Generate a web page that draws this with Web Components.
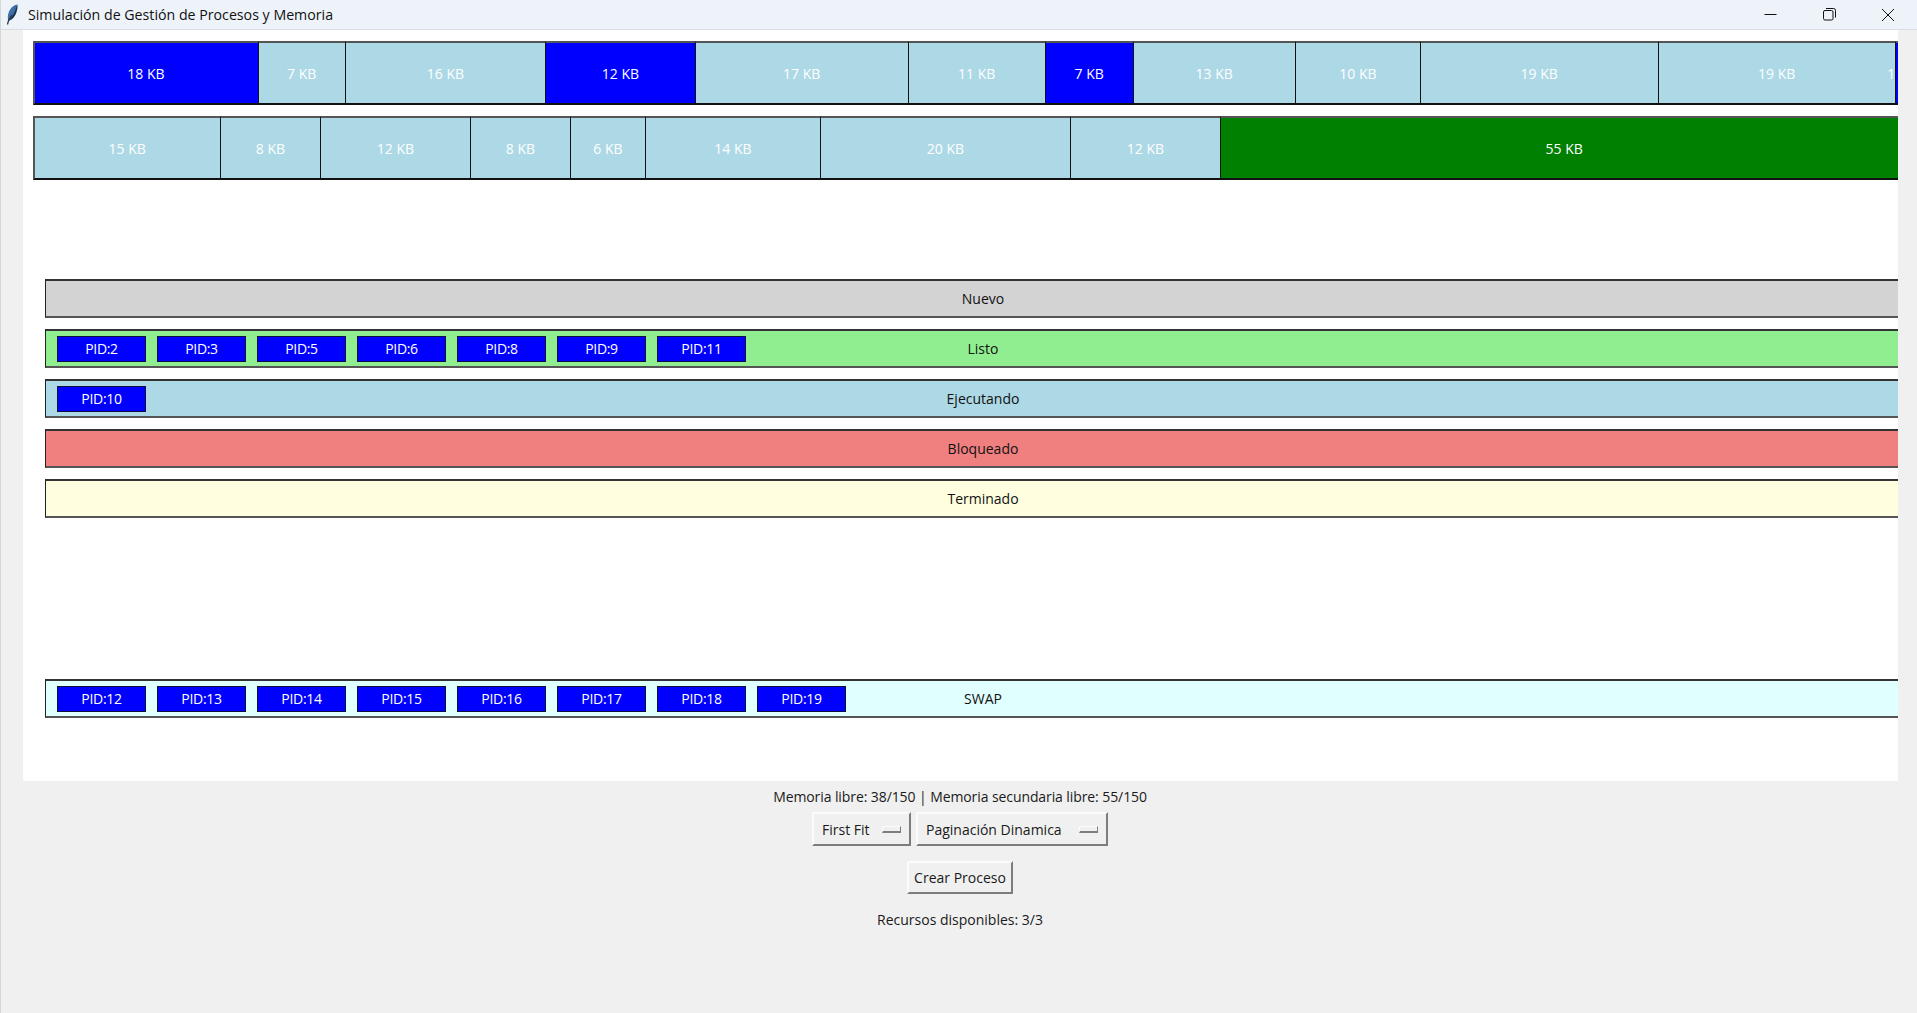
<!DOCTYPE html>
<html lang="es">
<head>
<meta charset="utf-8">
<title>Simulación de Gestión de Procesos y Memoria</title>
<style>
  html, body { margin: 0; height: 100%; overflow: hidden; }
  body { background: #f0f0f0; font: 14px "Open Sans", "Liberation Sans", sans-serif; color: #1a1a1a; }
  sim-window { height: 100vh; }
</style>
</head>
<body>
<sim-window>
  <title-bar>Simulación de Gestión de Procesos y Memoria</title-bar>
  <sim-canvas>
    <mem-row slot="memory">
      <mem-block kb="18" kind="used"></mem-block>
      <mem-block kb="7"></mem-block>
      <mem-block kb="16"></mem-block>
      <mem-block kb="12" kind="used"></mem-block>
      <mem-block kb="17"></mem-block>
      <mem-block kb="11"></mem-block>
      <mem-block kb="7" kind="used"></mem-block>
      <mem-block kb="13"></mem-block>
      <mem-block kb="10"></mem-block>
      <mem-block kb="19"></mem-block>
      <mem-block kb="19"></mem-block>
      <mem-block kb="1" kind="used"></mem-block>
    </mem-row>
    <mem-row slot="memory">
      <mem-block kb="15"></mem-block>
      <mem-block kb="8"></mem-block>
      <mem-block kb="12"></mem-block>
      <mem-block kb="8"></mem-block>
      <mem-block kb="6"></mem-block>
      <mem-block kb="14"></mem-block>
      <mem-block kb="20"></mem-block>
      <mem-block kb="12"></mem-block>
      <mem-block kb="55" kind="free"></mem-block>
    </mem-row>
    <state-bar slot="states" label="Nuevo" color="#d3d3d3"></state-bar>
    <state-bar slot="states" label="Listo" color="#90ee90" pids="2,3,5,6,8,9,11"></state-bar>
    <state-bar slot="states" label="Ejecutando" color="#add8e6" pids="10"></state-bar>
    <state-bar slot="states" label="Bloqueado" color="#f08080"></state-bar>
    <state-bar slot="states" label="Terminado" color="#ffffe0"></state-bar>
    <state-bar slot="swap" label="SWAP" color="#e0ffff" pids="12,13,14,15,16,17,18,19"></state-bar>
  </sim-canvas>
  <control-panel>
    <span slot="memory">Memoria libre: 38/150 | Memoria secundaria libre: 55/150</span>
    <tk-menu slot="menus" style="width:99px">First Fit</tk-menu>
    <tk-menu slot="menus" style="width:192px">Paginación Dinamica</tk-menu>
    <tk-button slot="action">Crear Proceso</tk-button>
    <span slot="resources">Recursos disponibles: 3/3</span>
  </control-panel>
</sim-window>

<script>
const KB_WIDTH = 12.5;

class SimWindow extends HTMLElement {
  constructor() {
    super();
    this.attachShadow({mode: 'open'});
    this.shadowRoot.innerHTML = `
      <style>
        :host { display: flex; flex-direction: column; border-left: 1px solid #d6d6d6; box-sizing: border-box; }
      </style>
      <slot></slot>
    `;
  }
}

class TitleBar extends HTMLElement {
  constructor() {
    super();
    this.attachShadow({mode: 'open'});
    this.shadowRoot.innerHTML = `
      <style>
        :host {
          display: flex; align-items: center; height: 29px; flex: none;
          background: #eef3fa; border-bottom: 1px solid #d9dce0;
          color: #111; font-size: 14.2px;
        }
        .logo { width: 12px; height: 21px; margin: 0 10px 0 5px; flex: none; }
        .text { flex: 1; }
        .btn { width: 58.5px; height: 29px; display: flex; align-items: center; justify-content: center; flex: none; }
        svg { display: block; }
      </style>
      <svg class="logo" viewBox="0 0 12 21">
        <path d="M11.5 .5C8 1 4 4 2.500 9C1.500 12 1.500 15 2.500 17C6 16 9 12.500 10.500 8C11.500 5 12 3 11.500 .5Z" fill="#3d6fa8"/>
        <path d="M11 1.500C9.500 6 8 11 3 16.500C6.500 15.500 9 12 10.300 8C11 5.500 11.300 3.500 11 1.500Z" fill="#1f2d3f"/>
        <path d="M6 11L2.500 16.500L1.500 20.500" fill="none" stroke="#2a2f38" stroke-width="1.200"/>
      </svg>
      <span class="text"><slot></slot></span>
      <span class="btn"><svg width="13" height="13" viewBox="0 0 13 13"><path d="M.5 6.500H12.500" stroke="#111" fill="none"/></svg></span>
      <span class="btn"><svg width="13" height="13" viewBox="0 0 13 13"><rect x=".5" y="2.500" width="9.500" height="9.500" rx="1.500" fill="none" stroke="#111"/><path d="M3 .5H10.500A2 2 0 0 1 12.500 2.500V9.500" fill="none" stroke="#111"/></svg></span>
      <span class="btn"><svg width="14" height="14" viewBox="0 0 14 14"><path d="M1 1L13 13M13 1L1 13" stroke="#111" fill="none"/></svg></span>
    `;
  }
}

class SimCanvas extends HTMLElement {
  constructor() {
    super();
    this.attachShadow({mode: 'open'});
    this.shadowRoot.innerHTML = `
      <style>
        :host {
          display: block; box-sizing: border-box; flex: none;
          width: 1875px; height: 751px; margin-left: 22px;
          background: #fff; overflow: hidden; padding: 11px 0 0 9.500px;
        }
        .memory { display: flex; flex-direction: column; gap: 11px; width: 1876px; }
        .states { display: flex; flex-direction: column; gap: 11px; width: 1875px; margin: 99px 0 0 12.500px; }
        .swap { width: 1875px; margin: 161px 0 0 12.500px; }
      </style>
      <div class="memory"><slot name="memory"></slot></div>
      <div class="states"><slot name="states"></slot></div>
      <div class="swap"><slot name="swap"></slot></div>
    `;
  }
}

class MemRow extends HTMLElement {
  constructor() {
    super();
    this.attachShadow({mode: 'open'});
    this.shadowRoot.innerHTML = `
      <style>
        :host { display: flex; height: 64px; }
      </style>
      <slot></slot>
    `;
  }
}

class MemBlock extends HTMLElement {
  constructor() {
    super();
    this.attachShadow({mode: 'open'});
  }
  connectedCallback() {
    const kb = Number(this.getAttribute('kb'));
    const colors = {used: '#0000ff', free: '#008000'};
    const bg = colors[this.getAttribute('kind')] || '#add8e6';
    this.shadowRoot.innerHTML = `
      <style>
        :host {
          display: flex; align-items: center; justify-content: center;
          box-sizing: border-box; flex: none; width: ${kb * KB_WIDTH}px;
          background: ${bg}; color: #fff; white-space: nowrap;
          border-top: 2px solid #555; border-bottom: 2px solid #111; border-left: 1px solid #111;
          font-size: 14px;
        }
        :host(:first-child) { border-left: 2px solid #555; }
      </style>
      <span>${kb} KB</span>
    `;
  }
}

class PidChip extends HTMLElement {
  constructor() {
    super();
    this.attachShadow({mode: 'open'});
    this.shadowRoot.innerHTML = `
      <style>
        :host {
          display: flex; align-items: center; justify-content: center;
          box-sizing: border-box; width: 89px; height: 26px; flex: none;
          background: #0000ff; color: #fff; border: 1px solid #10103c;
          font-size: 14px; letter-spacing: -.3px;
        }
      </style>
      <slot></slot>
    `;
  }
}

class StateBar extends HTMLElement {
  constructor() {
    super();
    this.attachShadow({mode: 'open'});
  }
  connectedCallback() {
    const pids = (this.getAttribute('pids') || '').split(',').filter(Boolean);
    this.shadowRoot.innerHTML = `
      <style>
        :host {
          display: grid; box-sizing: border-box; height: 39px;
          background: ${this.getAttribute('color')}; color: #111; font-size: 14px;
          border-top: 2px solid #333; border-bottom: 2px solid #555; border-left: 1px solid #222;
        }
        .label, .chips { grid-area: 1 / 1; }
        .label { display: flex; align-items: center; justify-content: center; }
        .chips { display: flex; gap: 11px; align-items: center; padding-left: 11px; }
      </style>
      <div class="label">${this.getAttribute('label')}</div>
      <div class="chips">${pids.map(p => `<pid-chip>PID:${p}</pid-chip>`).join('')}</div>
    `;
  }
}

class ControlPanel extends HTMLElement {
  constructor() {
    super();
    this.attachShadow({mode: 'open'});
    this.shadowRoot.innerHTML = `
      <style>
        :host {
          display: flex; flex-direction: column; align-items: center;
          font-size: 14px; padding-top: 5px; margin-left: 2px;
        }
        .line { height: 22px; line-height: 22px; }
        .memory { letter-spacing: -.09px; }
        .menus { display: flex; gap: 5px; margin-top: 4px; }
        .action { margin-top: 15px; }
        .resources { margin-top: 15px; }
      </style>
      <div class="line memory"><slot name="memory"></slot></div>
      <div class="menus"><slot name="menus"></slot></div>
      <div class="action"><slot name="action"></slot></div>
      <div class="line resources"><slot name="resources"></slot></div>
    `;
  }
}

const RAISED = `
  box-sizing: border-box; background: #f0f0f0;
  border: 2px solid; border-color: #fbfbfb #7d7d7d #7d7d7d #fbfbfb;
`;

class TkMenu extends HTMLElement {
  constructor() {
    super();
    this.attachShadow({mode: 'open'});
    this.shadowRoot.innerHTML = `
      <style>
        :host {
          display: flex; align-items: center; height: 34px; padding: 0 8px 0 8px;
          ${RAISED}
        }
        .mark { width: 19px; height: 7px; margin-left: auto; flex: none; ${RAISED} border-width: 1px; border-bottom-width: 2px; }
      </style>
      <slot></slot>
      <span class="mark"></span>
    `;
  }
}

class TkButton extends HTMLElement {
  constructor() {
    super();
    this.attachShadow({mode: 'open'});
    this.shadowRoot.innerHTML = `
      <style>
        :host {
          display: flex; align-items: center; justify-content: center;
          width: 106px; height: 33px;
          ${RAISED}
        }
      </style>
      <slot></slot>
    `;
  }
}

customElements.define('sim-window', SimWindow);
customElements.define('title-bar', TitleBar);
customElements.define('sim-canvas', SimCanvas);
customElements.define('mem-row', MemRow);
customElements.define('mem-block', MemBlock);
customElements.define('pid-chip', PidChip);
customElements.define('state-bar', StateBar);
customElements.define('control-panel', ControlPanel);
customElements.define('tk-menu', TkMenu);
customElements.define('tk-button', TkButton);
</script>
</body>
</html>
